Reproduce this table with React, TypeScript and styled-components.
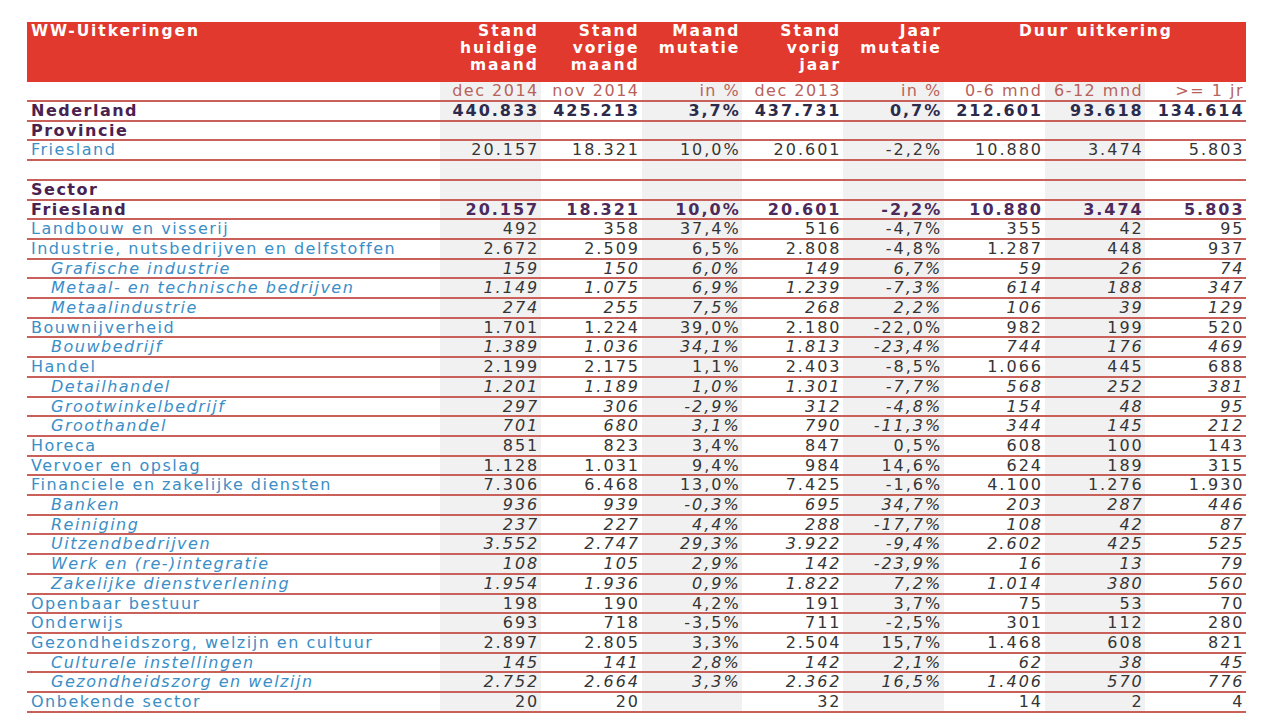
import React from "react";
import styled, { createGlobalStyle } from "styled-components";

const Global = createGlobalStyle`
  html, body { margin: 0; padding: 0; background: #ffffff; }
  body { font-family: "DejaVu Sans", Verdana, sans-serif; }
`;

const Page = styled.div`
  padding: 22px 0 0 27px;
  width: 1253px;
  box-sizing: border-box;
`;

const Table = styled.table`
  width: 1219px;
  table-layout: fixed;
  border-collapse: collapse;
  font-family: "DejaVu Sans", Verdana, sans-serif;
  font-size: 16px;
  letter-spacing: 1.5px;
`;

const HeadCell = styled.th<{ $align?: "left" | "right" | "center" }>`
  background: #e1392d;
  color: #ffffff;
  font-weight: bold;
  font-size: 15.5px;
  letter-spacing: 1.9px;
  text-align: ${(p) => p.$align ?? "right"};
  vertical-align: top;
  line-height: 17px;
  height: 59px;
  padding: 1px 2px 0 4px;
  white-space: nowrap;
`;

const SubCell = styled.td<{ $stripe?: boolean }>`
  background: ${(p) => (p.$stripe ? "#f1f1f1" : "#ffffff")};
  color: #b8625c;
  text-align: right;
  line-height: 18px;
  height: 18px;
  padding: 0 2px 0 0;
  border-bottom: 2px solid #c9605a;
  white-space: nowrap;
`;

type Kind = "total" | "group" | "bold" | "main" | "sub" | "blank";

const labelColor: Record<Kind, string> = {
  total: "#4a2250",
  group: "#4a2250",
  bold: "#4a2250",
  main: "#3b8ec6",
  sub: "#3b8ec6",
  blank: "#3b8ec6",
};

const valueColor: Record<Kind, string> = {
  total: "#2c2b4c",
  group: "#333333",
  bold: "#4c2a5c",
  main: "#353535",
  sub: "#353535",
  blank: "#353535",
};

const LabelCell = styled.td<{ $kind: Kind }>`
  color: ${(p) => labelColor[p.$kind]};
  font-weight: ${(p) => (p.$kind === "total" || p.$kind === "group" || p.$kind === "bold" ? "bold" : "normal")};
  font-style: ${(p) => (p.$kind === "sub" ? "italic" : "normal")};
  padding: 0 0 0 ${(p) => (p.$kind === "sub" ? "24px" : "4px")};
  line-height: 17.7px;
  height: 17.7px;
  border-bottom: 2px solid #c9605a;
  white-space: nowrap;
  overflow: hidden;
`;

const ValueCell = styled.td<{ $kind: Kind; $stripe?: boolean }>`
  background: ${(p) => (p.$stripe ? "#f1f1f1" : "#ffffff")};
  color: ${(p) => valueColor[p.$kind]};
  font-weight: ${(p) => (p.$kind === "total" || p.$kind === "bold" ? "bold" : "normal")};
  font-style: ${(p) => (p.$kind === "sub" ? "italic" : "normal")};
  letter-spacing: 2px;
  text-align: right;
  padding: 0 1.5px 0 0;
  line-height: 17.7px;
  height: 17.7px;
  border-bottom: 2px solid #c9605a;
  white-space: nowrap;
`;

type Row = { label: string; kind: Kind; v?: string[] };

const rows: Row[] = [
  { label: "Nederland", kind: "total", v: ["440.833", "425.213", "3,7%", "437.731", "0,7%", "212.601", "93.618", "134.614"] },
  { label: "Provincie", kind: "group" },
  { label: "Friesland", kind: "main", v: ["20.157", "18.321", "10,0%", "20.601", "-2,2%", "10.880", "3.474", "5.803"] },
  { label: "", kind: "blank" },
  { label: "Sector", kind: "group" },
  { label: "Friesland", kind: "bold", v: ["20.157", "18.321", "10,0%", "20.601", "-2,2%", "10.880", "3.474", "5.803"] },
  { label: "Landbouw en visserij", kind: "main", v: ["492", "358", "37,4%", "516", "-4,7%", "355", "42", "95"] },
  { label: "Industrie, nutsbedrijven en delfstoffen", kind: "main", v: ["2.672", "2.509", "6,5%", "2.808", "-4,8%", "1.287", "448", "937"] },
  { label: "Grafische industrie", kind: "sub", v: ["159", "150", "6,0%", "149", "6,7%", "59", "26", "74"] },
  { label: "Metaal- en technische bedrijven", kind: "sub", v: ["1.149", "1.075", "6,9%", "1.239", "-7,3%", "614", "188", "347"] },
  { label: "Metaalindustrie", kind: "sub", v: ["274", "255", "7,5%", "268", "2,2%", "106", "39", "129"] },
  { label: "Bouwnijverheid", kind: "main", v: ["1.701", "1.224", "39,0%", "2.180", "-22,0%", "982", "199", "520"] },
  { label: "Bouwbedrijf", kind: "sub", v: ["1.389", "1.036", "34,1%", "1.813", "-23,4%", "744", "176", "469"] },
  { label: "Handel", kind: "main", v: ["2.199", "2.175", "1,1%", "2.403", "-8,5%", "1.066", "445", "688"] },
  { label: "Detailhandel", kind: "sub", v: ["1.201", "1.189", "1,0%", "1.301", "-7,7%", "568", "252", "381"] },
  { label: "Grootwinkelbedrijf", kind: "sub", v: ["297", "306", "-2,9%", "312", "-4,8%", "154", "48", "95"] },
  { label: "Groothandel", kind: "sub", v: ["701", "680", "3,1%", "790", "-11,3%", "344", "145", "212"] },
  { label: "Horeca", kind: "main", v: ["851", "823", "3,4%", "847", "0,5%", "608", "100", "143"] },
  { label: "Vervoer en opslag", kind: "main", v: ["1.128", "1.031", "9,4%", "984", "14,6%", "624", "189", "315"] },
  { label: "Financiele en zakelijke diensten", kind: "main", v: ["7.306", "6.468", "13,0%", "7.425", "-1,6%", "4.100", "1.276", "1.930"] },
  { label: "Banken", kind: "sub", v: ["936", "939", "-0,3%", "695", "34,7%", "203", "287", "446"] },
  { label: "Reiniging", kind: "sub", v: ["237", "227", "4,4%", "288", "-17,7%", "108", "42", "87"] },
  { label: "Uitzendbedrijven", kind: "sub", v: ["3.552", "2.747", "29,3%", "3.922", "-9,4%", "2.602", "425", "525"] },
  { label: "Werk en (re-)integratie", kind: "sub", v: ["108", "105", "2,9%", "142", "-23,9%", "16", "13", "79"] },
  { label: "Zakelijke dienstverlening", kind: "sub", v: ["1.954", "1.936", "0,9%", "1.822", "7,2%", "1.014", "380", "560"] },
  { label: "Openbaar bestuur", kind: "main", v: ["198", "190", "4,2%", "191", "3,7%", "75", "53", "70"] },
  { label: "Onderwijs", kind: "main", v: ["693", "718", "-3,5%", "711", "-2,5%", "301", "112", "280"] },
  { label: "Gezondheidszorg, welzijn en cultuur", kind: "main", v: ["2.897", "2.805", "3,3%", "2.504", "15,7%", "1.468", "608", "821"] },
  { label: "Culturele instellingen", kind: "sub", v: ["145", "141", "2,8%", "142", "2,1%", "62", "38", "45"] },
  { label: "Gezondheidszorg en welzijn", kind: "sub", v: ["2.752", "2.664", "3,3%", "2.362", "16,5%", "1.406", "570", "776"] },
  { label: "Onbekende sector", kind: "main", v: ["20", "20", "", "32", "", "14", "2", "4"] },
];

const subHeads = ["dec 2014", "nov 2014", "in %", "dec 2013", "in %", "0-6 mnd", "6-12 mnd", ">= 1 jr"];

const LabelCol = styled.col`
  width: 413px;
`;
const DataCol = styled.col`
  width: 100.75px;
`;

const Line = styled.span`
  display: block;
`;

export default function App() {
  return (
    <Page>
      <Global />
      <Table>
        <colgroup>
          <LabelCol />
          {subHeads.map((_, i) => (
            <DataCol key={i} />
          ))}
        </colgroup>
        <thead>
          <tr>
            <HeadCell $align="left">WW-Uitkeringen</HeadCell>
            <HeadCell>
              <Line>Stand</Line>
              <Line>huidige</Line>
              <Line>maand</Line>
            </HeadCell>
            <HeadCell>
              <Line>Stand</Line>
              <Line>vorige</Line>
              <Line>maand</Line>
            </HeadCell>
            <HeadCell>
              <Line>Maand</Line>
              <Line>mutatie</Line>
            </HeadCell>
            <HeadCell>
              <Line>Stand</Line>
              <Line>vorig</Line>
              <Line>jaar</Line>
            </HeadCell>
            <HeadCell>
              <Line>Jaar</Line>
              <Line>mutatie</Line>
            </HeadCell>
            <HeadCell colSpan={3} $align="center">
              Duur uitkering
            </HeadCell>
          </tr>
          <tr>
            <SubCell />
            {subHeads.map((s, i) => (
              <SubCell key={i} $stripe={i % 2 === 0}>
                {s}
              </SubCell>
            ))}
          </tr>
        </thead>
        <tbody>
          {rows.map((r, ri) => (
            <tr key={ri}>
              <LabelCell $kind={r.kind}>{r.label}</LabelCell>
              {subHeads.map((_, i) => (
                <ValueCell key={i} $kind={r.kind} $stripe={i % 2 === 0}>
                  {r.v ? r.v[i] : ""}
                </ValueCell>
              ))}
            </tr>
          ))}
        </tbody>
      </Table>
    </Page>
  );
}
